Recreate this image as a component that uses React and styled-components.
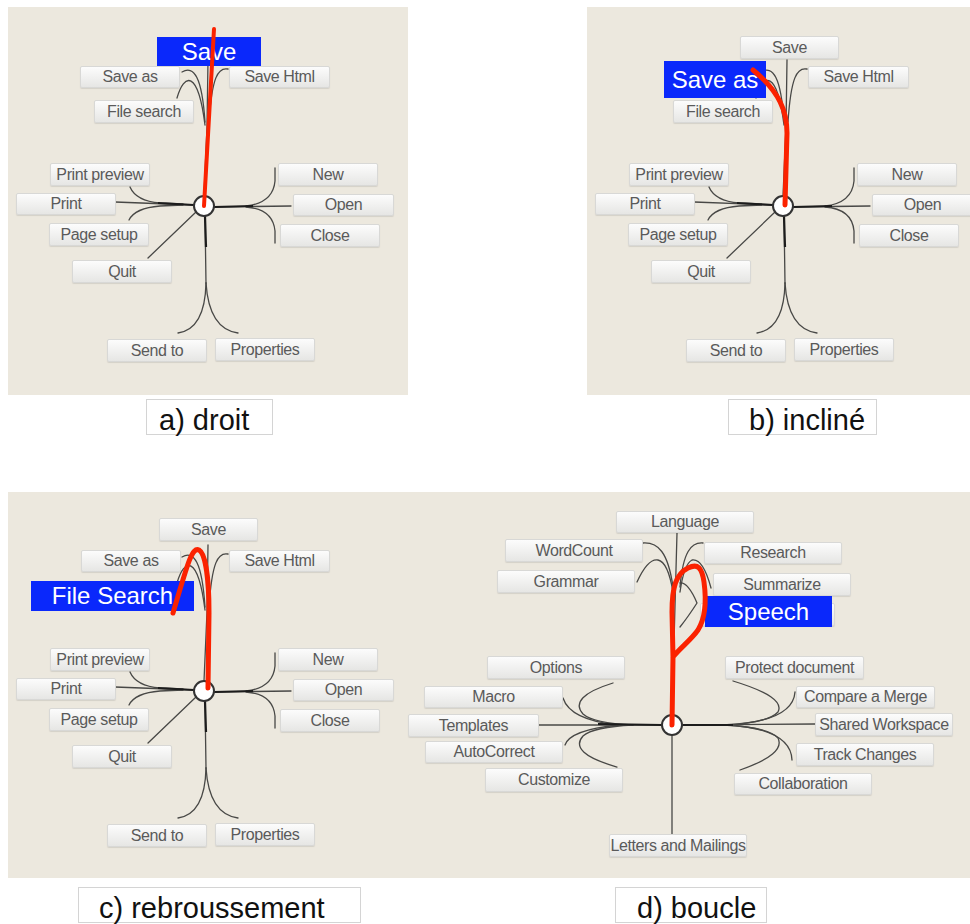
import React from 'react';
import styled, { createGlobalStyle } from 'styled-components';

const GlobalStyle = createGlobalStyle`
  body {
    margin: 0;
    background: #ffffff;
    font-family: "Liberation Sans", Arial, sans-serif;
  }
`;

const fileMenu = [
  { label: 'Save', x: 153, y: 29, w: 99, h: 23 },
  { label: 'Save as', x: 72, y: 59, w: 100, h: 22 },
  { label: 'Save Html', x: 221, y: 59, w: 101, h: 22 },
  { label: 'File search', x: 86, y: 93, w: 100, h: 23 },
  { label: 'Print preview', x: 42, y: 156, w: 100, h: 23 },
  { label: 'Print', x: 8, y: 186, w: 100, h: 22 },
  { label: 'Page setup', x: 41, y: 216, w: 100, h: 23 },
  { label: 'Quit', x: 64, y: 253, w: 100, h: 23 },
  { label: 'New', x: 270, y: 156, w: 100, h: 23 },
  { label: 'Open', x: 285, y: 187, w: 101, h: 22 },
  { label: 'Close', x: 272, y: 217, w: 100, h: 23 },
  { label: 'Send to', x: 99, y: 332, w: 100, h: 23 },
  { label: 'Properties', x: 207, y: 331, w: 100, h: 23 },
];

const fileWires = [
  'M107,195 L186,198',
  'M122,180 Q128,194 152,196 L175,197',
  'M121,213 Q127,201 152,199 L175,198',
  'M140,251 L188,205',
  'M206,200 L283,199',
  'M267,161 L267,174 Q265,196 238,199',
  'M267,236 L267,224 Q265,202 238,200',
  'M197,209 L198,276',
  'M198,276 Q197,322 170,326',
  'M198,276 Q201,322 230,326',
  'M196,189 L199,120 L200,53',
  'M174,65 C186,58 194,70 197,115',
  'M169,91 C176,66 190,62 197,118',
  'M220,62 C210,60 204,70 201,115',
];

// darker strokes where the branches meet near the hub
const fileHeavy = ['M150,196 L186,198', 'M206,200 L245,199', 'M197,209 L198,240'];

const toolsMenu = [
  { label: 'Language', x: 208, y: 19, w: 138, h: 22 },
  { label: 'WordCount', x: 97, y: 47, w: 138, h: 23 },
  { label: 'Research', x: 296, y: 50, w: 138, h: 22 },
  { label: 'Grammar', x: 89, y: 78, w: 138, h: 23 },
  { label: 'Summarize', x: 305, y: 81, w: 138, h: 23 },
  { label: '', x: 292, y: 111, w: 135, h: 23 },
  { label: 'Options', x: 79, y: 164, w: 138, h: 23 },
  { label: 'Macro', x: 16, y: 194, w: 139, h: 22 },
  { label: 'Templates', x: 0, y: 222, w: 131, h: 23 },
  { label: 'AutoCorrect', x: 17, y: 249, w: 138, h: 22 },
  { label: 'Customize', x: 77, y: 276, w: 138, h: 24 },
  { label: 'Protect document', x: 317, y: 164, w: 139, h: 23 },
  { label: 'Compare a Merge', x: 388, y: 194, w: 139, h: 22 },
  { label: 'Shared Workspace', x: 407, y: 221, w: 138, h: 23 },
  { label: 'Track Changes', x: 388, y: 251, w: 138, h: 23 },
  { label: 'Collaboration', x: 326, y: 281, w: 138, h: 22 },
  { label: 'Letters and Mailings', x: 201, y: 342, w: 138, h: 23 },
];

const toolsWires = [
  'M269,41 L264,223',
  'M264,243 L264,342',
  'M131,233 L254,233',
  'M274,233 L407,232',
  'M205,191 Q160,205 175,222 Q185,231 225,233',
  'M155,206 Q162,228 210,233',
  'M157,253 Q162,238 210,233',
  'M209,275 Q160,261 175,244 Q185,235 225,233',
  'M325,189 Q378,205 370,220 Q360,231 315,233',
  'M387,200 Q385,229 320,233',
  'M384,268 Q383,237 320,233',
  'M332,278 Q378,262 370,246 Q360,235 315,233',
  'M235,51 C250,50 260,60 265,95',
  'M229,90 Q240,66 250,68 Q260,70 265,100',
  'M295,51 C283,50 275,60 272,95',
  'M303,96 Q295,66 284,68 Q276,72 272,100',
  'M272,91 Q280,90 289,111 Q280,125 272,135',
];

const panels = {
  a: {
    hide: ['Save'],
    active: { label: 'Save', x: 149, y: 30, w: 104, h: 29 },
    stroke: 'M206,22 L196,199',
    strokeWidth: 4,
  },
  b: {
    hide: ['Save as'],
    active: { label: 'Save as', x: 77, y: 54, w: 102, h: 37 },
    stroke: 'M198,198 L200,126 C200,105 193,85 166,63',
    strokeWidth: 5,
  },
  c: {
    hide: ['File search'],
    moved: {
      Save: { x: 151, y: 26 },
      'Save as': { x: 73, y: 58 },
      'Save Html': { x: 221, y: 58 },
    },
    active: { label: 'File Search', x: 23, y: 89, w: 163, h: 30 },
    stroke: 'M200,196 L201,121 C201,90 198,62 191,58 C184,55 180,70 165,121',
    strokeWidth: 5,
  },
};

const Page = styled.div`
  width: 970px;
  height: 924px;
  overflow: hidden;
  padding-top: 7px;
  box-sizing: border-box;
`;

const TopRow = styled.div`
  display: flex;
  gap: 179px;
  padding-left: 8px;
`;

const Stage = styled.div`
  position: relative;
  width: ${(p) => p.$w}px;
  height: ${(p) => p.$h}px;
  background: #ece8de;
  overflow: hidden;
  display: flex;
`;

const BottomStage = styled(Stage)`
  margin-top: 57px;
  margin-left: 8px;
`;

const Canvas = styled.div`
  position: relative;
  flex: 0 0 ${(p) => p.$w}px;
  height: 100%;
`;

const Layer = styled.svg`
  position: absolute;
  left: 0;
  top: 0;
  width: 100%;
  height: 100%;
  overflow: visible;
  pointer-events: none;
`;

const Item = styled.div`
  position: absolute;
  left: ${(p) => p.$x}px;
  top: ${(p) => p.$y}px;
  width: ${(p) => p.$w}px;
  height: ${(p) => p.$h}px;
  box-sizing: border-box;
  border: 1px solid #d8d8d6;
  border-radius: 2px;
  background: linear-gradient(#fcfcfc, #e6e6e4);
  box-shadow: 0 1px 1px rgba(0, 0, 0, 0.1);
  color: #5a5a5a;
  font-size: 16px;
  letter-spacing: -0.4px;
  line-height: ${(p) => p.$h - 2}px;
  text-align: center;
  white-space: nowrap;
  overflow: hidden;
`;

const ActiveItem = styled(Item)`
  border: none;
  border-radius: 0;
  background: #0a28fb;
  box-shadow: none;
  color: #ffffff;
  font-size: 24px;
  letter-spacing: 0;
  line-height: ${(p) => p.$h}px;
`;

const CaptionRow = styled.div`
  display: flex;
  margin-top: ${(p) => p.$top}px;
`;

const Caption = styled.div`
  margin-left: ${(p) => p.$left}px;
  width: ${(p) => p.$w}px;
  height: 36px;
  box-sizing: border-box;
  padding-left: ${(p) => p.$pad}px;
  border: 1px solid #d4d4d4;
  background: #ffffff;
  color: #111;
  font-size: 29px;
  line-height: 40px;
  white-space: nowrap;
`;

const Hub = ({ x, y, dot }) => (
  <g>
    <circle cx={x} cy={y} r="10" fill="#fff" stroke="#333" strokeWidth="2" />
    {dot && <circle cx={x} cy={y} r="1.6" fill="#f22" />}
  </g>
);

const Wires = ({ paths, hub, dot, heavy }) => (
  <Layer>
    <g fill="none" stroke="#484846" strokeWidth="1.3" strokeLinecap="round">
      {paths.map((d) => (
        <path key={d} d={d} />
      ))}
    </g>
    <g fill="none" stroke="#1c1c1c" strokeWidth="2.2">
      {heavy.map((d) => (
        <path key={d} d={d} />
      ))}
    </g>
    <Hub x={hub[0]} y={hub[1]} dot={dot} />
  </Layer>
);

const Gesture = ({ d, width }) => (
  <Layer>
    <path d={d} fill="none" stroke="#fb2200" strokeWidth={width} strokeLinecap="round" strokeLinejoin="round" />
  </Layer>
);

const FileMenu = ({ id }) => {
  const cfg = panels[id];
  const items = fileMenu
    .filter((it) => !cfg.hide.includes(it.label))
    .map((it) => ({ ...it, ...(cfg.moved && cfg.moved[it.label]) }));
  const a = cfg.active;
  return (
    <Canvas $w={400}>
      <Wires paths={fileWires} hub={[196, 199]} heavy={fileHeavy} />
      {items.map((it) => (
        <Item key={it.label} $x={it.x} $y={it.y} $w={it.w} $h={it.h}>
          {it.label}
        </Item>
      ))}
      <ActiveItem $x={a.x} $y={a.y} $w={a.w} $h={a.h}>
        {a.label}
      </ActiveItem>
      <Gesture d={cfg.stroke} width={cfg.strokeWidth} />
    </Canvas>
  );
};

const ToolsMenu = () => (
  <Canvas $w={562}>
    <Wires
      paths={toolsWires}
      hub={[264, 233]}
      dot
      heavy={['M190,232 L254,233', 'M274,233 L325,233']}
    />
    {toolsMenu.map((it, i) => (
      <Item key={i} $x={it.x} $y={it.y} $w={it.w} $h={it.h}>
        {it.label}
      </Item>
    ))}
    <ActiveItem $x={297} $y={104} $w={127} $h={31}>
      Speech
    </ActiveItem>
    <Gesture
      d="M264,233 L265,165 L264,120 C264,95 268,82 280,76 C290,71 294,76 296,90 C298,105 298,125 290,138 C283,148 272,156 265,165"
      width={5}
    />
  </Canvas>
);

const App = () => (
  <Page>
    <GlobalStyle />
    <TopRow>
      <Stage $w={400} $h={388}>
        <FileMenu id="a" />
      </Stage>
      <Stage $w={383} $h={388}>
        <FileMenu id="b" />
      </Stage>
    </TopRow>
    <CaptionRow $top={4}>
      <Caption $left={146} $w={127} $pad={12}>a) droit</Caption>
      <Caption $left={455} $w={149} $pad={20}>b) incliné</Caption>
    </CaptionRow>
    <BottomStage $w={962} $h={386}>
      <FileMenu id="c" />
      <ToolsMenu />
    </BottomStage>
    <CaptionRow $top={9}>
      <Caption $left={78} $w={283} $pad={20}>c) rebroussement</Caption>
      <Caption $left={254} $w={152} $pad={21}>d) boucle</Caption>
    </CaptionRow>
  </Page>
);

export default App;
